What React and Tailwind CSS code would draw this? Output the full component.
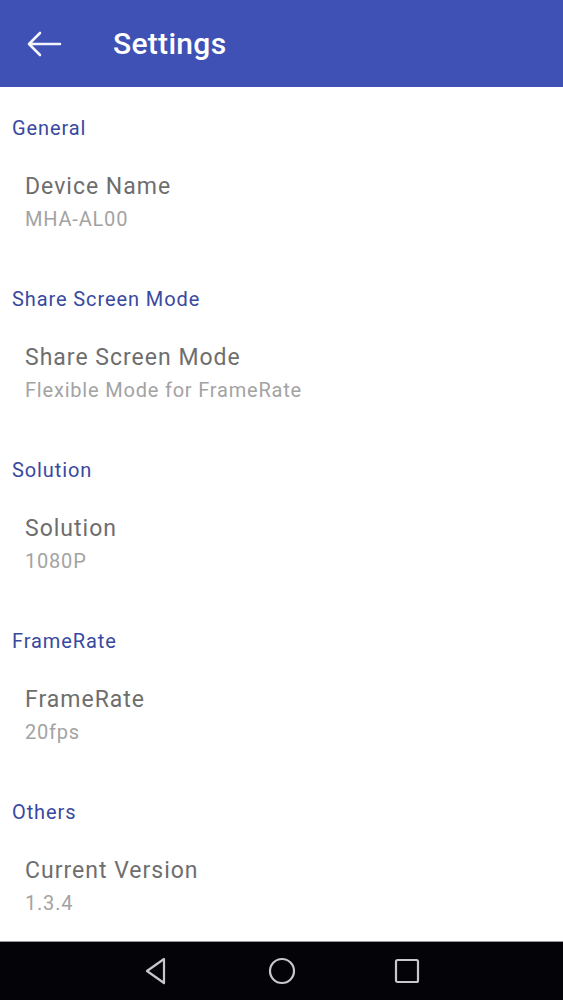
import React from "react";

const sections = [
  { cat: "General", title: "Device Name", summary: "MHA-AL00" },
  { cat: "Share Screen Mode", title: "Share Screen Mode", summary: "Flexible Mode for FrameRate" },
  { cat: "Solution", title: "Solution", summary: "1080P" },
  { cat: "FrameRate", title: "FrameRate", summary: "20fps" },
  { cat: "Others", title: "Current Version", summary: "1.3.4" },
];

const App = () => {
  return (
    <div className="w-[563px] h-[1000px] flex flex-col bg-white font-['Roboto',sans-serif] overflow-hidden">
      {/* toolbar */}
      <div className="h-[87px] bg-[#3f51b5] flex items-center shrink-0">
        <svg className="ml-[26px]" width="36" height="28" viewBox="0 0 36 28" fill="none" stroke="#f3f3fb" strokeWidth="2.6" strokeLinecap="round" strokeLinejoin="round">
          <path d="M34 14H3M14 3L3 14l11 11" />
        </svg>
        <span className="ml-[51px] text-[30px] tracking-[0.3px] text-white font-medium leading-none">Settings</span>
      </div>

      {/* list */}
      <div className="flex-1 min-h-0 overflow-hidden flex flex-col pt-[29px]">
        {sections.map((s) => (
          <div key={s.cat} className="h-[171px] shrink-0 flex flex-col">
            <div className="pl-[12px] text-[20px] tracking-[0.9px] leading-[24px] text-[#3949a0]">{s.cat}</div>
            <div className="pl-[25px] mt-[33px] text-[23px] tracking-[1px] leading-[28px] text-[#6e6e6e]">{s.title}</div>
            <div className="pl-[25px] mt-[6px] text-[20px] tracking-[0.8px] leading-[24px] text-[#a3a3a3]">{s.summary}</div>
          </div>
        ))}
      </div>

      {/* nav bar */}
      <div className="h-[59px] shrink-0 bg-[#040307] border-t border-[#9a9a9a] flex items-center justify-center gap-[98px]">
        <svg width="26" height="28" viewBox="0 0 26 28" fill="none" stroke="#c8c8c8" strokeWidth="2.2" strokeLinejoin="round">
          <path d="M20 2L3 14l17 12z" />
        </svg>
        <svg width="28" height="28" viewBox="0 0 28 28" fill="none" stroke="#c8c8c8" strokeWidth="2.2">
          <circle cx="14" cy="14" r="12" />
        </svg>
        <svg width="26" height="26" viewBox="0 0 26 26" fill="none" stroke="#c8c8c8" strokeWidth="2.2">
          <rect x="2" y="2" width="22" height="22" rx="1.5" />
        </svg>
      </div>
    </div>
  );
};

export default App;
